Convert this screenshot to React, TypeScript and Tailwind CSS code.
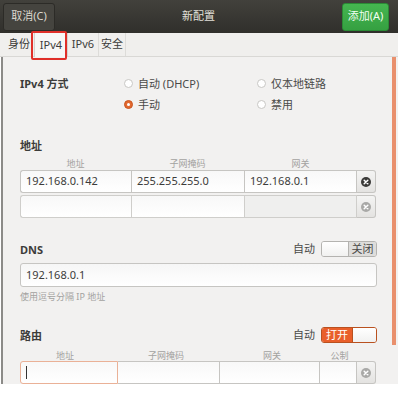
import React from 'react';

const font = { fontFamily: '"Noto Sans", "Noto Sans CJK SC", sans-serif' };

function Radio({ checked, label }: { checked?: boolean; label: string }) {
  return (
    <div className="flex items-center h-[14px] gap-[5px]">
      {checked ? (
        <span className="w-[9px] h-[9px] rounded-full bg-[#e2682f] border border-[#c9551f] flex items-center justify-center">
          <span className="w-[3px] h-[3px] rounded-full bg-white" />
        </span>
      ) : (
        <span className="w-[9px] h-[9px] rounded-full bg-white border border-[#c8c7c4]" />
      )}
      <span className="text-[11px] text-[#4a4a48] leading-none">{label}</span>
    </div>
  );
}

function ClearIcon({ dim }: { dim?: boolean }) {
  return (
    <svg width="10" height="10" viewBox="0 0 10 10">
      <circle cx="5" cy="5" r="5" fill={dim ? '#a9a9a7' : '#3a3a38'} />
      <path d="M3.2 3.2 L6.8 6.8 M6.8 3.2 L3.2 6.8" stroke="#fff" strokeWidth="1.5" strokeLinecap="round" />
    </svg>
  );
}

function DelBtn({ dim }: { dim?: boolean }) {
  return (
    <div className="w-[19px] h-full flex items-center justify-center rounded-r-[3px] border border-l-0 border-[#c6c5c2] bg-gradient-to-b from-[#f4f4f3] to-[#e4e3e1]">
      <ClearIcon dim={dim} />
    </div>
  );
}

function Cell({ w, text, grey, focus, last }: { w: string; text?: string; grey?: boolean; focus?: boolean; last?: boolean }) {
  return (
    <div
      className={`${w} h-full flex items-center px-[5px] text-[11px] text-[#3c3c3a] ${
        focus ? 'border border-[#eab197] rounded-l-[3px]' : 'border-y border-[#c6c5c2]'
      } ${last ? 'border-r' : ''} ${grey ? 'bg-[#f1f1f0]' : 'bg-gradient-to-b from-[#f8f8f8] to-white'}`}
    >
      {focus ? <span className="w-px h-[13px] bg-[#333]" /> : text}
    </div>
  );
}

function SectionTitle({ children }: { children: React.ReactNode }) {
  return <div className="text-[11px] font-bold text-[#3c3c3a] leading-none">{children}</div>;
}

export default function App() {
  return (
    <div className="w-[398px] h-[395px] bg-white relative overflow-hidden" style={font}>
      {/* header */}
      <div className="h-[33px] flex items-center justify-between px-[3px] bg-gradient-to-b from-[#42413c] to-[#302f2b]">
        <div className="h-[28px] w-[52px] flex items-center justify-center rounded-[3px] bg-[#45443f] border border-[#2c2b27] text-[11px] text-[#dcd9d0]">
          取消(C)
        </div>
        <div className="text-[11px] text-[#e3e1da]">新配置</div>
        <div className="h-[28px] w-[47px] mr-[6px] flex items-center justify-center rounded-[3px] bg-gradient-to-b from-[#45b650] to-[#35a041] border border-[#2b8a35] text-[11px] text-[#f2fff2]">
          添加(A)
        </div>
      </div>

      {/* tabs */}
      <div className="h-[24px] bg-[#f0efed] flex items-stretch pl-[4px] border-b border-[#d9d8d5] text-[11px] text-[#3c3c3a]">
        <div className="px-[4px] flex items-center">身份</div>
        <div className="w-[34px] flex items-center justify-center bg-[#f7f7f6] border-x border-[#d4d3d0] mb-[-1px]">IPv4</div>
        <div className="w-[31px] flex items-center justify-center border-r border-[#dddcd9]">IPv6</div>
        <div className="w-[27px] flex items-center justify-center border-r border-[#dddcd9]">安全</div>
      </div>

      {/* red annotation */}
      <div className="absolute left-[31px] top-[31px] w-[36px] h-[29px] border-2 border-[#e0302a] rounded-[2px]" />

      {/* content */}
      <div className="h-[327px] ml-px border-l-2 border-[#8c8b88] bg-[#f2f1f0] flex">
        <div className="w-[389px] pl-[17px] pr-[15px] flex flex-col">
          <div className="flex mt-[19px]">
            <div className="w-[104px] h-[14px] flex items-center">
              <SectionTitle>IPv4 方式</SectionTitle>
            </div>
            <div className="grid grid-cols-[133px_100px] gap-y-[7px]">
              <Radio label="自动 (DHCP)" />
              <Radio label="仅本地链路" />
              <Radio checked label="手动" />
              <Radio label="禁用" />
            </div>
          </div>

          <div className="mt-[27px] h-[14px] flex items-center">
            <SectionTitle>地址</SectionTitle>
          </div>
          <div className="mt-[5px] h-[12px] flex text-[9px] text-[#a3a2a0] leading-none items-center">
            <div className="w-[111px] text-center">地址</div>
            <div className="w-[113px] text-center">子网掩码</div>
            <div className="w-[113px] text-center">网关</div>
          </div>
          <div className="mt-px h-[23px] flex">
            <div className="w-[111px] h-full border border-r-0 border-[#c6c5c2] rounded-l-[3px] bg-gradient-to-b from-[#f8f8f8] to-white flex items-center px-[5px] text-[11px] text-[#3c3c3a]">192.168.0.142</div>
            <div className="w-[113px] h-full border border-r-0 border-[#c6c5c2] bg-gradient-to-b from-[#f8f8f8] to-white flex items-center px-[5px] text-[11px] text-[#3c3c3a]">255.255.255.0</div>
            <div className="w-[113px] h-full border border-[#c6c5c2] bg-gradient-to-b from-[#f8f8f8] to-white flex items-center px-[5px] text-[11px] text-[#3c3c3a]">192.168.0.1</div>
            <DelBtn />
          </div>
          <div className="mt-[2px] h-[23px] flex">
            <div className="w-[111px] h-full border border-r-0 border-[#cfcecb] rounded-l-[3px] bg-gradient-to-b from-[#f8f8f8] to-white" />
            <div className="w-[113px] h-full border border-r-0 border-[#cfcecb] bg-gradient-to-b from-[#f8f8f8] to-white" />
            <div className="w-[113px] h-full border border-[#cfcecb] bg-[#efefee]" />
            <DelBtn dim />
          </div>

          <div className="mt-[23px] h-[16px] flex items-center justify-between">
            <SectionTitle>DNS</SectionTitle>
            <div className="flex items-center gap-[6px]">
              <span className="text-[11px] text-[#4a4a48]">自动</span>
              <div className="w-[56px] h-[16px] flex rounded-[3px] border border-[#b4b3b0] overflow-hidden">
                <div className="w-[27px] bg-gradient-to-b from-white to-[#f1f1f0] border-r border-[#b4b3b0]" />
                <div className="flex-1 bg-[#dedddb] flex items-center justify-center text-[11px] text-[#4a4a48]">关闭</div>
              </div>
            </div>
          </div>
          <div className="mt-[6px] h-[24px] rounded-[3px] border border-[#c6c5c2] bg-gradient-to-b from-[#f6f6f6] to-white flex items-center px-[5px] text-[11px] text-[#3c3c3a]">
            192.168.0.1
          </div>
          <div className="mt-[4px] h-[12px] flex items-center text-[9px] text-[#a3a2a0]">使用逗号分隔 IP 地址</div>

          <div className="mt-[24px] h-[16px] flex items-center justify-between">
            <SectionTitle>路由</SectionTitle>
            <div className="flex items-center gap-[6px]">
              <span className="text-[11px] text-[#4a4a48]">自动</span>
              <div className="w-[56px] h-[16px] flex rounded-[3px] border border-[#b9511f] overflow-hidden">
                <div className="w-[30px] bg-[#e95f2a] flex items-center justify-center text-[11px] text-white">打开</div>
                <div className="flex-1 bg-gradient-to-b from-white to-[#f1f1f0] border-l border-[#b9511f]" />
              </div>
            </div>
          </div>
          <div className="mt-[6px] h-[12px] flex text-[9px] text-[#a3a2a0] leading-none items-center">
            <div className="w-[90px] text-center">地址</div>
            <div className="w-[112px] text-center">子网掩码</div>
            <div className="w-[100px] text-center">网关</div>
            <div className="w-[35px] text-center">公制</div>
          </div>
          <div className="h-[23px] flex">
            <Cell w="w-[98px]" focus />
            <Cell w="w-[101px]" />
            <div className="w-[100px] h-full border border-r-0 border-[#c6c5c2] bg-gradient-to-b from-[#f8f8f8] to-white" />
            <div className="w-[38px] h-full border border-[#c6c5c2] bg-gradient-to-b from-[#f8f8f8] to-white" />
            <DelBtn dim />
          </div>
        </div>
        <div className="w-[4px] h-[288px] bg-[#e9906d]" />
      </div>
    </div>
  );
}
